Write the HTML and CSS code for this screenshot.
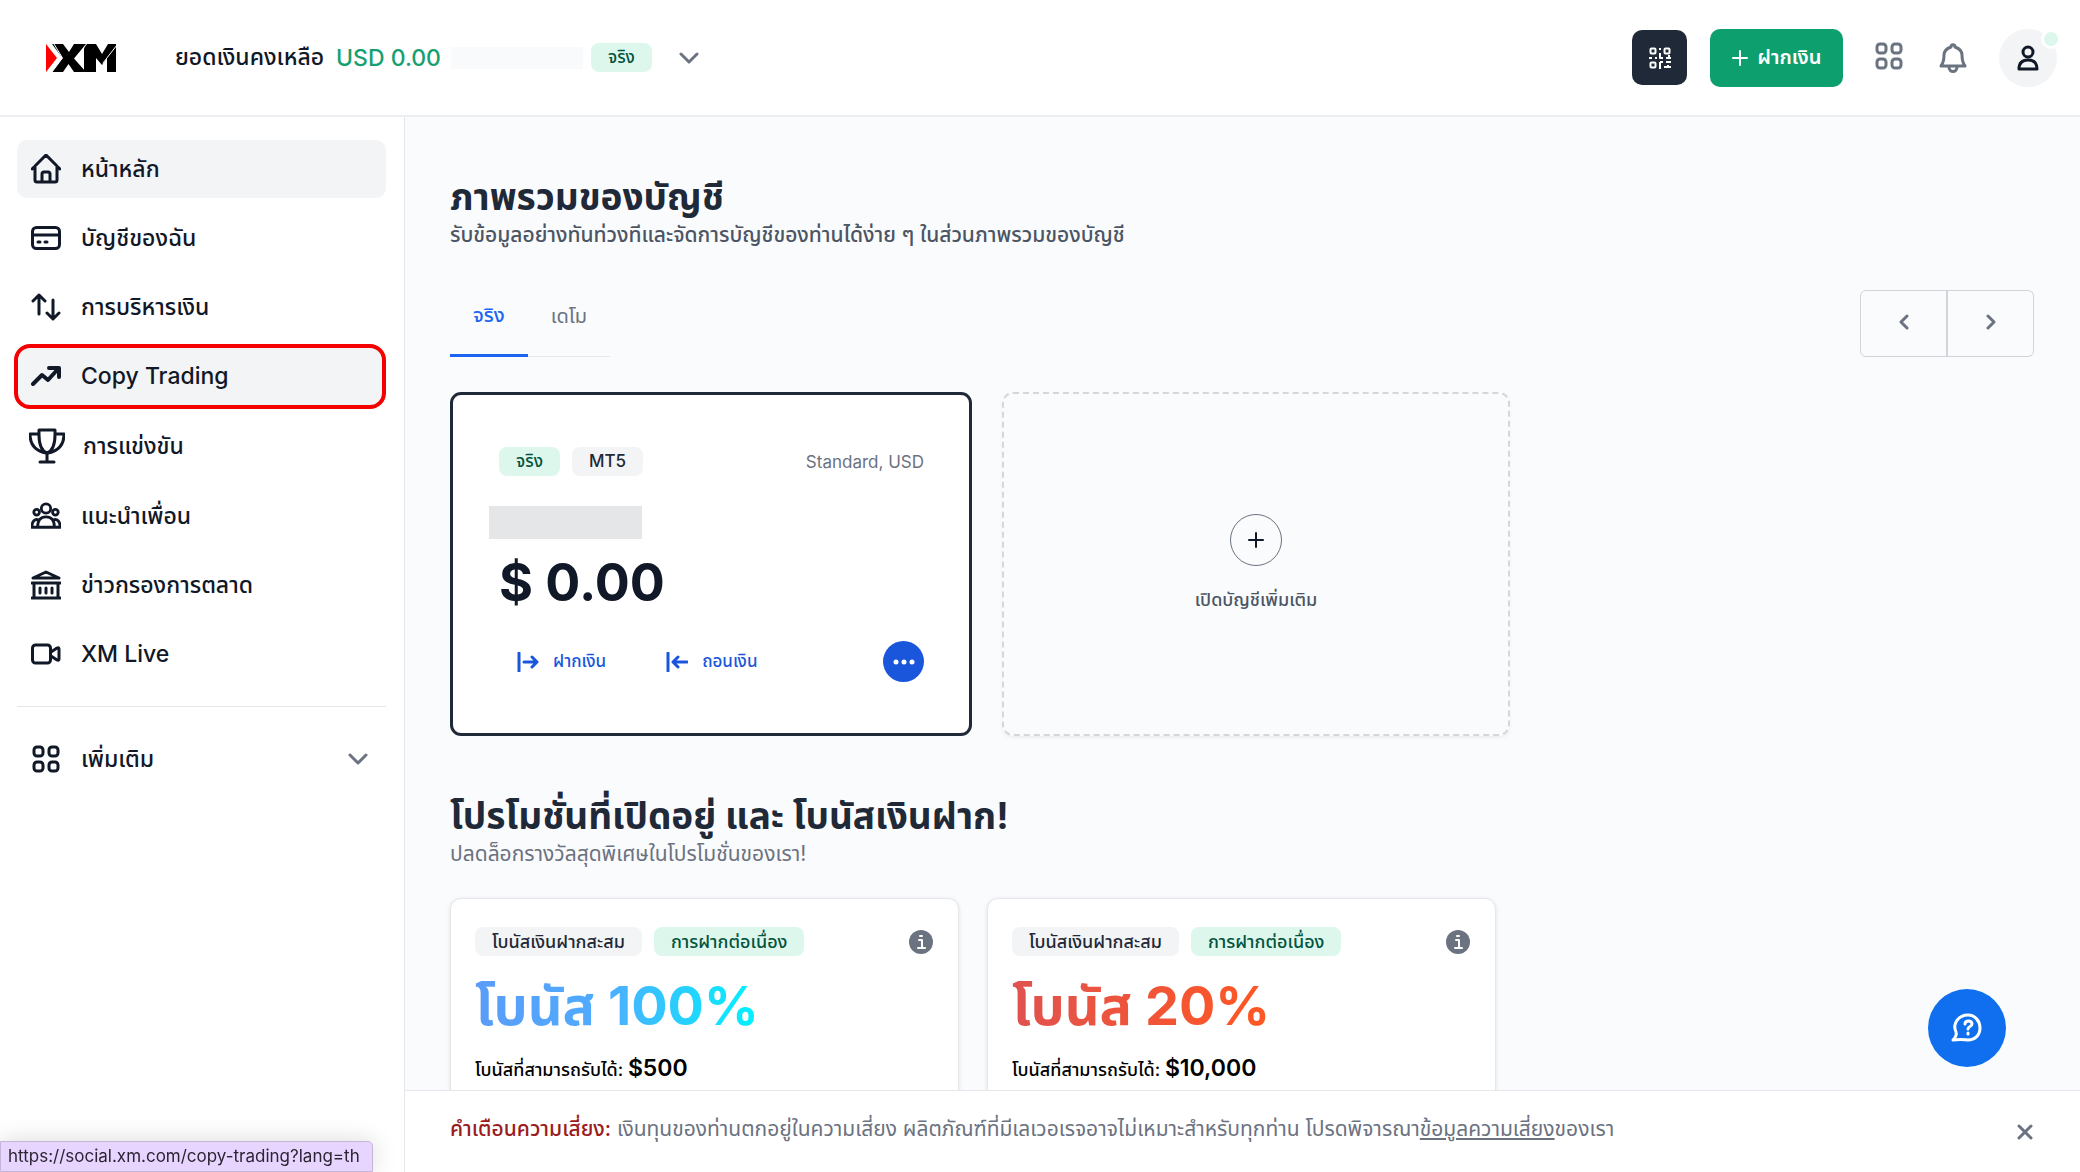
FILE: index.html
```html
<!DOCTYPE html>
<html lang="th">
<head>
  <meta charset="UTF-8">
  <title>XM - ภาพรวมของบัญชี</title>
  <meta name="viewport" content="width=device-width, initial-scale=1.0">
  <link rel="stylesheet" href="styles.css">
</head>
<body>

<header class="topbar">
  <a href="#" class="logo" aria-label="XM">
    <svg width="72" height="30" viewBox="0 0 72 30">
      <path d="M1 1L12 15L1 29Z" fill="#f00"/>
      <path d="M7 1H18L24 9L29 1H41L29 15.500L41 29H29L23.500 21L18 29H7L17.500 15Z" fill="#000"/>
      <path d="M42 1H51L57 11L63 1H71V29H62V15L57 22L51 15V29H39V5Z" fill="#000"/>
      <path d="M9 1L17.500 15L7 29M39 5L36 9M72 2L58 20" stroke="#fff" stroke-width="1" fill="none"/>
    </svg>
  </a>

  <div class="balance">
    <span>ยอดเงินคงเหลือ</span>
    <span class="balance-amount">USD 0.00</span>
    <span class="balance-account"></span>
    <span class="badge badge-green">จริง</span>
    <button class="icon-btn balance-toggle" aria-label="เลือกบัญชี">
      <svg width="20" height="12" viewBox="0 0 20 12"><path d="M2 2L10 10L18 2"/></svg>
    </button>
  </div>

  <div class="actions">
    <button class="qr-btn" aria-label="QR">
      <svg width="22" height="22" viewBox="0 0 22 22">
        <rect x="1.500" y="1.500" width="5" height="5" rx="1"/>
        <rect x="15.500" y="1.500" width="5" height="5" rx="1"/>
        <rect x="1.500" y="15.500" width="5" height="5" rx="1"/>
        <path d="M11 1V3M11 6V11H14M0 11H3M6 11H8M17 11H22M20 8V11M11 15V22M11 15H14M17 15H22M15 20H22M19 18V20"/>
      </svg>
    </button>
    <button class="deposit-btn">
      <svg width="16" height="16" viewBox="0 0 16 16"><path d="M8 1V15M1 8H15"/></svg>
      ฝากเงิน
    </button>
    <button class="icon-btn apps-btn" aria-label="แอป">
      <svg width="30" height="30" viewBox="0 0 30 30">
        <rect x="3" y="3" width="9" height="9" rx="3"/><rect x="18" y="3" width="9" height="9" rx="3"/>
        <rect x="3" y="18" width="9" height="9" rx="3"/><rect x="18" y="18" width="9" height="9" rx="3"/>
      </svg>
    </button>
    <button class="icon-btn bell-btn" aria-label="การแจ้งเตือน">
      <svg width="28" height="32" viewBox="0 0 28 32">
        <path d="M2 24C5 20 5 17 5 13C5 8 9 6 12 5C12 2 16 2 16 5C19 6 23 8 23 13C23 17 23 20 26 24ZM10 25C10 31 18 31 18 25"/>
      </svg>
    </button>
    <button class="avatar-btn" aria-label="โปรไฟล์">
      <svg width="22" height="26" viewBox="0 0 22 26">
        <circle cx="11" cy="7" r="5"/>
        <path d="M2 24C2 18 5 15 11 15C17 15 20 18 20 24Z"/>
      </svg>
      <span class="status-dot"></span>
    </button>
  </div>
</header>

<div class="layout">

  <aside class="sidebar">
    <nav>
      <a href="#" class="nav-item active">
        <svg width="30" height="30" viewBox="0 0 30 30"><path d="M1 15L15 1L29 15M4 12V26Q4 28 6 28H24Q26 28 26 26V12M11 28V20Q11 18 13 18H17Q19 18 19 20V28"/></svg>
        หน้าหลัก
      </a>
      <a href="#" class="nav-item">
        <svg width="30" height="30" viewBox="0 0 30 30"><rect x="1.500" y="4.500" width="27" height="21" rx="4"/><path d="M2 12H28M7 19H9M14 19H16"/></svg>
        บัญชีของฉัน
      </a>
      <a href="#" class="nav-item">
        <svg width="30" height="30" viewBox="0 0 30 30"><path d="M8 22V3M2 9L8 3L14 9M22 8V27M16 21L22 27L28 21"/></svg>
        การบริหารเงิน
      </a>
      <a href="https://social.xm.com/copy-trading?lang=th" class="nav-item highlighted">
        <svg width="30" height="30" viewBox="0 0 30 30"><path d="M2 23L11 14L17 19L27 8M18 7H28V16" stroke-width="4"/></svg>
        Copy Trading
      </a>
      <a href="#" class="nav-item nav-item-large">
        <svg width="36" height="36" viewBox="0 0 36 36"><path d="M10 2H26V7C26 17 23 23 18 25C13 23 10 17 10 7ZM10 6H1C1 17 7 23 17 25M26 6H35C35 17 29 23 19 25M18 25V34M11 34H25"/></svg>
        การแข่งขัน
      </a>
      <a href="#" class="nav-item">
        <svg width="30" height="30" viewBox="0 0 32 30">
          <circle cx="16" cy="7" r="5"/><circle cx="6" cy="11" r="3"/><circle cx="26" cy="11" r="3"/>
          <path d="M7 27C7 20 10 16 16 16C22 16 25 20 25 27ZM8 19C4 18 1 20 1 27H7M24 19C28 18 31 20 31 27H25"/>
        </svg>
        แนะนำเพื่อน
      </a>
      <a href="#" class="nav-item">
        <svg width="30" height="30" viewBox="0 0 30 30"><path d="M2 8L15 2L28 8ZM1 13H29M3 13V28M27 13V28M1 28H29M9 18V23M15 18V23M21 18V23"/></svg>
        ข่าวกรองการตลาด
      </a>
      <a href="#" class="nav-item">
        <svg width="30" height="30" viewBox="0 0 30 30"><rect x="1.500" y="6" width="18" height="18" rx="3"/><path d="M20 13L26 9Q28 8 28 10V20Q28 22 26 21L20 17"/></svg>
        XM Live
      </a>
    </nav>

    <button class="nav-item more-btn">
      <svg width="30" height="30" viewBox="0 0 30 30">
        <rect x="3" y="3" width="9" height="9" rx="3"/><rect x="18" y="3" width="9" height="9" rx="3"/>
        <rect x="3" y="18" width="9" height="9" rx="3"/><rect x="18" y="18" width="9" height="9" rx="3"/>
      </svg>
      เพิ่มเติม
      <svg class="more-arrow" width="20" height="12" viewBox="0 0 20 12"><path d="M2 2L10 10L18 2"/></svg>
    </button>
  </aside>

  <div class="content">
    <main>
      <section class="overview">
        <h1>ภาพรวมของบัญชี</h1>
        <p class="subtitle subtitle-dark">รับข้อมูลอย่างทันท่วงทีและจัดการบัญชีของท่านได้ง่าย ๆ ในส่วนภาพรวมของบัญชี</p>

        <div class="toolbar">
          <div class="tabs">
            <button class="tab tab-active">จริง</button>
            <button class="tab">เดโม</button>
          </div>
          <div class="pager">
            <button aria-label="ก่อนหน้า"><svg width="10" height="16" viewBox="0 0 10 16"><path d="M8 2L2 8L8 14"/></svg></button>
            <button aria-label="ถัดไป"><svg width="10" height="16" viewBox="0 0 10 16"><path d="M2 2L8 8L2 14"/></svg></button>
          </div>
        </div>

        <div class="accounts">
          <div class="account-card">
            <div class="account-head">
              <span class="badge badge-green">จริง</span>
              <span class="badge badge-gray">MT5</span>
              <span class="account-type">Standard, USD</span>
            </div>
            <div class="account-number"></div>
            <div class="account-balance">$ 0.00</div>
            <div class="account-actions">
              <button class="link-btn">
                <svg width="22" height="20" viewBox="0 0 22 20"><path d="M2 1V19M7 10H20M15 5L20 10L15 15"/></svg>
                ฝากเงิน
              </button>
              <button class="link-btn">
                <svg width="22" height="20" viewBox="0 0 22 20"><path d="M2 1V19M7 10H21M12 5L7 10L12 15"/></svg>
                ถอนเงิน
              </button>
              <button class="dots-btn" aria-label="ตัวเลือกเพิ่มเติม">
                <svg width="24" height="6" viewBox="0 0 24 6"><circle cx="4" cy="3" r="2.500"/><circle cx="12" cy="3" r="2.500"/><circle cx="20" cy="3" r="2.500"/></svg>
              </button>
            </div>
          </div>

          <button class="add-card">
            <span class="add-circle"><svg width="16" height="16" viewBox="0 0 16 16"><path d="M8 1V15M1 8H15"/></svg></span>
            เปิดบัญชีเพิ่มเติม
          </button>
        </div>
      </section>

      <section class="promotions">
        <h2>โปรโมชั่นที่เปิดอยู่ และ โบนัสเงินฝาก!</h2>
        <p class="subtitle">ปลดล็อกรางวัลสุดพิเศษในโปรโมชั่นของเรา!</p>

        <div class="promos">
          <div class="promo-card">
            <div class="promo-head">
              <span class="badge badge-gray">โบนัสเงินฝากสะสม</span>
              <span class="badge badge-green">การฝากต่อเนื่อง</span>
              <svg class="info" width="24" height="24" viewBox="0 0 24 24"><circle cx="12" cy="12" r="12"/><path d="M10 10H13V18M9 18H16M11 6H13"/></svg>
            </div>
            <div class="promo-title promo-blue">โบนัส 100%</div>
            <p class="promo-amount">โบนัสที่สามารถรับได้: <strong>$500</strong></p>
          </div>
          <div class="promo-card">
            <div class="promo-head">
              <span class="badge badge-gray">โบนัสเงินฝากสะสม</span>
              <span class="badge badge-green">การฝากต่อเนื่อง</span>
              <svg class="info" width="24" height="24" viewBox="0 0 24 24"><circle cx="12" cy="12" r="12"/><path d="M10 10H13V18M9 18H16M11 6H13"/></svg>
            </div>
            <div class="promo-title promo-red">โบนัส 20%</div>
            <p class="promo-amount">โบนัสที่สามารถรับได้: <strong>$10,000</strong></p>
          </div>
        </div>
      </section>
    </main>

    <footer class="risk">
      <p><span class="risk-label">คำเตือนความเสี่ยง:</span> เงินทุนของท่านตกอยู่ในความเสี่ยง ผลิตภัณฑ์ที่มีเลเวอเรจอาจไม่เหมาะสำหรับทุกท่าน โปรดพิจารณา<a href="#">ข้อมูลความเสี่ยง</a>ของเรา</p>
      <button class="icon-btn" aria-label="ปิด">
        <svg width="16" height="16" viewBox="0 0 16 16"><path d="M2 2L14 14M14 2L2 14"/></svg>
      </button>
    </footer>
  </div>

</div>

<button class="help-btn" aria-label="ช่วยเหลือ">
  <svg width="32" height="30" viewBox="0 0 32 30">
    <path d="M5 19C1 10 8 2 17 2C24 2 29 8 29 15C29 22 24 27 17 27C14 27 12 26 2 27C5 24 6 22 5 19Z"/>
    <path d="M14 11C14 7 21 7 21 11C21 14 17 13 17 16M17 20V21"/>
  </svg>
</button>

<div class="url-status">https://social.xm.com/copy-trading?lang=th</div>

</body>
</html>
```

FILE: styles.css
```css
* {
  box-sizing: border-box;
}
body {
  font-family: Inter, "Noto Sans Thai", "Noto Sans", sans-serif;
  margin: 0;
  height: 100vh;
  display: flex;
  flex-direction: column;
  overflow: hidden;
  background: #fafbfd;
  color: #111827;
}
h1, h2, p {
  margin: 0;
}
button {
  font-family: inherit;
  border: none;
  background: none;
  padding: 0;
  cursor: pointer;
}
svg {
  flex: none;
  fill: none;
  stroke: currentColor;
  stroke-width: 3;
  stroke-linecap: round;
  stroke-linejoin: round;
}

/* header */
.topbar {
  display: flex;
  align-items: center;
  flex: none;
  height: 117px;
  padding: 0 23px 0 45px;
  background: white;
  border-bottom: 2px solid #eceef1;
}
.logo {
  display: flex;
  margin-right: 58px;
}
.logo svg {
  stroke: none;
}
.balance {
  display: flex;
  align-items: center;
  font-size: 23px;
  font-weight: 500;
}
.balance-amount {
  margin-left: 12px;
  color: #16a06f;
}
.balance-account {
  width: 132px;
  height: 22px;
  margin: 0 8px 0 10px;
  background: #f9fafb;
}
.balance-toggle {
  margin-left: 27px;
}
.icon-btn {
  display: flex;
  color: #6b7280;
}
.actions {
  display: flex;
  align-items: center;
  margin-left: auto;
}
.qr-btn {
  display: flex;
  align-items: center;
  justify-content: center;
  width: 55px;
  height: 55px;
  border-radius: 10px;
  background: #1f2937;
  color: white;
}
.qr-btn svg {
  stroke-width: 2;
  stroke-linecap: butt;
}
.deposit-btn {
  display: flex;
  align-items: center;
  justify-content: center;
  gap: 10px;
  width: 133px;
  height: 58px;
  margin: 0 31px 0 23px;
  border-radius: 10px;
  background: #0e9f6e;
  color: white;
  font-size: 20px;
  font-weight: 600;
}
.deposit-btn svg {
  stroke-width: 2;
}
.apps-btn {
  padding-bottom: 4px;
}
.bell-btn {
  margin: 0 32px 0 35px;
}
.avatar-btn {
  position: relative;
  display: flex;
  align-items: center;
  justify-content: center;
  width: 58px;
  height: 58px;
  border-radius: 50%;
  background: #f3f4f6;
  color: #111827;
}
.status-dot {
  position: absolute;
  top: 0;
  right: -4px;
  width: 20px;
  height: 20px;
  border: 3px solid white;
  border-radius: 50%;
  background: #def7ec;
}

.badge {
  height: 29px;
  padding: 0 17px;
  border-radius: 8px;
  font-size: 17px;
  font-weight: 500;
  line-height: 29px;
  white-space: nowrap;
}
.badge-green {
  background: #def7ec;
  color: #03543f;
}
.badge-gray {
  background: #f3f4f6;
  color: #1f2937;
}

/* sidebar */
.layout {
  display: flex;
  flex: 1;
  min-height: 0;
}
.sidebar {
  flex: none;
  width: 405px;
  padding: 23px 18px 0 17px;
  background: white;
  border-right: 1px solid #e5e7eb;
}
.sidebar nav {
  display: flex;
  flex-direction: column;
  gap: 11px;
  padding-bottom: 23px;
  border-bottom: 1px solid #e5e7eb;
}
.nav-item {
  position: relative;
  display: flex;
  align-items: center;
  gap: 20px;
  width: 100%;
  padding: 12px 14px;
  border-radius: 10px;
  color: #111827;
  font-size: 23px;
  font-weight: 500;
  line-height: 34px;
  text-decoration: none;
}
.nav-item-large {
  gap: 18px;
  padding: 12px;
}
.nav-item.active, .nav-item.highlighted {
  background: #f3f4f6;
}
.nav-item.highlighted::after {
  content: "";
  position: absolute;
  inset: -3px 0 -4px -3px;
  border: 4px solid #f50000;
  border-radius: 16px;
}
.more-btn {
  margin-top: 23px;
}
.more-arrow {
  margin-left: auto;
  margin-right: 4px;
  color: #6b7280;
}

/* main */
.content {
  display: flex;
  flex: 1;
  flex-direction: column;
  min-width: 0;
}
main {
  flex: 1;
  min-height: 0;
  overflow: hidden;
  padding: 56px 46px 0 45px;
}
h1, h2 {
  color: #1f2937;
  font-size: 37px;
  font-weight: 700;
  line-height: 48px;
}
.subtitle {
  color: #6b7280;
  font-size: 21px;
  line-height: 28px;
}
.subtitle-dark {
  color: #4b5563;
  font-weight: 500;
}
.toolbar {
  display: flex;
  justify-content: space-between;
  align-items: flex-end;
  margin-top: 41px;
}
.tabs {
  display: flex;
}
.tab {
  height: 67px;
  padding: 0 23px 12px;
  border-bottom: 1px solid #e5e7eb;
  color: #6b7280;
  font-size: 20px;
}
.tab-active {
  border-bottom: 3px solid #1c64f2;
  color: #1c64f2;
  font-weight: 500;
}
.pager {
  display: flex;
}
.pager button {
  display: flex;
  align-items: center;
  justify-content: center;
  width: 88px;
  height: 67px;
  padding-bottom: 4px;
  border: 1px solid #d1d5db;
  border-radius: 6px 0 0 6px;
  color: #6b7280;
}
.pager button + button {
  margin-left: -2px;
  border-left-width: 2px;
  border-radius: 0 6px 6px 0;
}
.accounts {
  display: flex;
  gap: 30px;
  margin-top: 35px;
}
.account-card {
  width: 522px;
  height: 344px;
  padding: 52px 45px 0 46px;
  border: 3px solid #1f2937;
  border-radius: 11px;
  background: white;
}
.account-head, .promo-head {
  display: flex;
  align-items: center;
  gap: 12px;
}
.account-type {
  margin-left: auto;
  color: #6b7280;
  font-size: 17px;
}
.account-number {
  width: 153px;
  height: 33px;
  margin: 30px 0 0 -10px;
  background: #e5e6e7;
}
.account-balance {
  margin-top: 12px;
  font-size: 52px;
  font-weight: 700;
  line-height: 64px;
}
.account-actions {
  display: flex;
  align-items: center;
  gap: 60px;
  margin-top: 26px;
  padding-left: 18px;
}
.link-btn {
  display: flex;
  align-items: center;
  gap: 14px;
  color: #1a56db;
  font-size: 17px;
  font-weight: 500;
}
.dots-btn {
  display: flex;
  align-items: center;
  justify-content: center;
  width: 41px;
  height: 41px;
  margin-left: auto;
  border-radius: 50%;
  background: #1a56db;
}
.dots-btn svg {
  fill: white;
  stroke: none;
}
.add-card {
  display: flex;
  flex-direction: column;
  align-items: center;
  justify-content: center;
  gap: 21px;
  width: 508px;
  height: 344px;
  border: 2px dashed #d5d7db;
  border-radius: 11px;
  color: #4b5563;
  font-size: 18px;
  font-weight: 500;
  box-shadow: 0 2px 3px #0000000d;
}
.add-circle {
  display: flex;
  align-items: center;
  justify-content: center;
  width: 52px;
  height: 52px;
  border: 1px solid #6b7280;
  border-radius: 50%;
  color: #111827;
}
.add-circle svg {
  stroke-width: 2;
}

/* promotions */
.promotions {
  margin-top: 56px;
}
.promos {
  display: flex;
  gap: 28px;
  margin-top: 30px;
}
.promo-card {
  width: 509px;
  height: 344px;
  padding: 28px 25px 28px 24px;
  border: 1px solid #e5e7eb;
  border-radius: 11px;
  background: white;
  box-shadow: 0 1px 4px #0000001a;
}
.promo-head .badge {
  font-size: 18px;
}
.info {
  margin-left: auto;
  fill: #6b7280;
  stroke: white;
  stroke-width: 2;
}
.info circle {
  stroke: none;
}
.promo-title {
  width: fit-content;
  margin-top: 18px;
  font-size: 54px;
  font-weight: 700;
  line-height: 64px;
  background-clip: text;
  color: transparent;
}
.promo-blue {
  background-image: linear-gradient(to right, #5a9cf8, #4facfe 45%, #00f2fe);
}
.promo-red {
  background-image: linear-gradient(to right, #e0524f, #ff5722);
}
.promo-amount {
  margin-top: 14px;
  color: black;
  font-size: 18px;
  font-weight: 500;
  line-height: 32px;
}
.promo-amount strong {
  font-size: 23px;
  font-weight: 600;
}

/* risk warning */
.risk {
  display: flex;
  align-items: center;
  justify-content: space-between;
  flex: none;
  height: 82px;
  padding: 0 47px 0 45px;
  border-top: 1px solid #e5e7eb;
  background: white;
  color: #6b7280;
  font-size: 21px;
}
.risk p {
  padding-bottom: 4px;
}
.risk a {
  color: inherit;
}
.risk-label {
  color: #9b1c1c;
  font-weight: 500;
}
.help-btn {
  position: fixed;
  right: 74px;
  bottom: 105px;
  display: flex;
  align-items: center;
  justify-content: center;
  width: 78px;
  height: 78px;
  border-radius: 50%;
  background: #0f6fef;
  color: white;
}
.url-status {
  position: fixed;
  left: 0;
  bottom: 0;
  padding: 0 12px 0 7px;
  border: 1px solid #c5b5d8;
  border-radius: 0 5px 0 0;
  background: #e8d5ff;
  color: #2b2433;
  font-size: 17px;
  line-height: 29px;
  box-shadow: 0 0 24px #00000026;
}
```
